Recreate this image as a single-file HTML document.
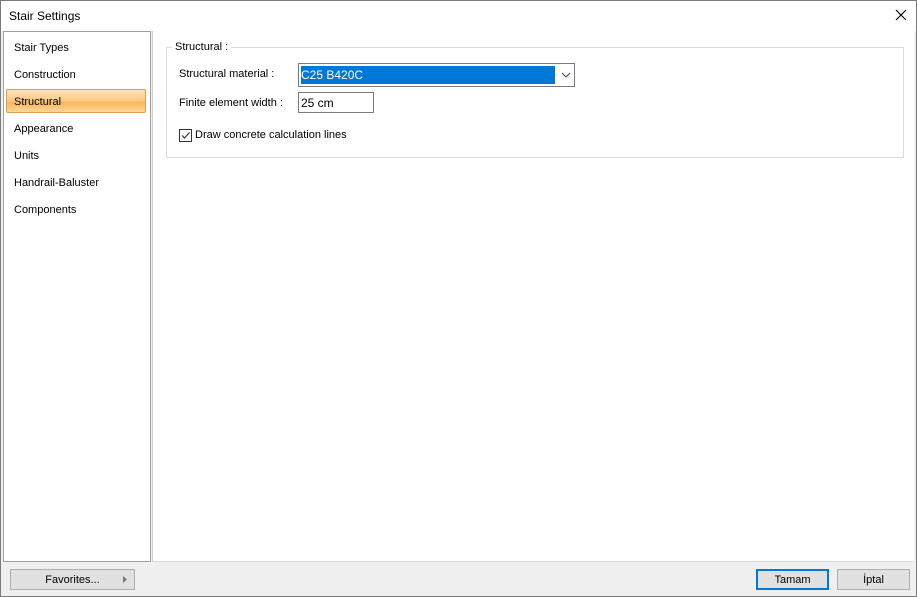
<!DOCTYPE html>
<html><head><style>
*{margin:0;padding:0;box-sizing:border-box}
body{width:917px;height:597px;overflow:hidden;background:#f0f0f0;font-family:"Liberation Sans",sans-serif;font-size:12px;color:#000;position:relative}
.frame{position:absolute;left:0;top:0;width:917px;height:597px;border:1px solid #7a7a7a;z-index:10;pointer-events:none}
.title{position:absolute;left:0;top:0;width:917px;height:31px;background:#fff}
.title span{position:absolute;left:9px;top:9px;font-size:12px}
.abs{position:absolute}
.left{left:3px;top:31px;width:148px;height:531px;background:#fff;border:1px solid #a0a0a0}
.right{left:152px;top:31px;width:762px;height:531px;background:#fff;border-left:1px solid #d0d0d0;border-bottom:1px solid #d8d8d8}
.item{position:absolute;left:14px;font-size:11px}
.sel{left:6px;top:89px;width:140px;height:24px;border:1px solid #d8a050;border-radius:2px;background:linear-gradient(#fde3b8,#fbc983 50%,#f8b55c 55%,#fcd79a)}
.btn{position:absolute;height:21px;border:1px solid #adadad;background:#e1e1e1;font-size:11px;text-align:center;line-height:21px}
</style></head><body>
<div class="frame"></div>
<div class="title"><span>Stair Settings</span>
<svg class="abs" style="left:895px;top:9px" width="12" height="12"><path d="M1 1L11 11M11 1L1 11" stroke="#000" stroke-width="1.2"/></svg></div>
<div class="abs left"></div>
<div class="abs sel"></div>
<div class="item" style="top:42px">Stair Types</div>
<div class="item" style="top:69px">Construction</div>
<div class="item" style="top:96px">Structural</div>
<div class="item" style="top:123px">Appearance</div>
<div class="item" style="top:150px">Units</div>
<div class="item" style="top:177px">Handrail-Baluster</div>
<div class="item" style="top:204px">Components</div>
<div class="abs right"></div>
<div class="abs" style="left:166px;top:47px;width:738px;height:111px;border:1px solid #dcdcdc"></div>
<div class="abs" style="left:172px;top:41px;background:#fff;padding:0 3px;font-size:11px">Structural :</div>
<div class="abs" style="left:179px;top:68px;font-size:11px">Structural material :</div>
<div class="abs" style="left:298px;top:63px;width:277px;height:24px;border:1px solid #7a7a7a;background:#fff"></div>
<div class="abs" style="left:301px;top:66px;width:254px;height:18px;background:#0078d7;color:#fff;font-size:12px;line-height:19px">C25 B420C</div>
<svg class="abs" style="left:561px;top:71px" width="10" height="8"><path d="M1 2L5 6L9 2" stroke="#444" fill="none"/></svg>
<div class="abs" style="left:179px;top:97px;font-size:11px">Finite element width :</div>
<div class="abs" style="left:298px;top:92px;width:76px;height:21px;border:1px solid #7a7a7a;background:#fff;padding:3px 2px;font-size:12px">25 cm</div>
<div class="abs" style="left:179px;top:129px;width:13px;height:13px;border:1px solid #333;background:#fff"></div>
<svg class="abs" style="left:180px;top:130px" width="11" height="11"><path d="M2 5.5L4.5 8L9.5 2.5" stroke="#333" stroke-width="1.2" fill="none"/></svg>
<div class="abs" style="left:195px;top:129px;font-size:11px">Draw concrete calculation lines</div>
<div class="btn" style="left:10px;top:569px;width:125px">Favorites...<svg class="abs" style="left:111px;top:5px" width="6" height="9"><path d="M1 1L5 4.5L1 8Z" fill="#777"/></svg></div>
<div class="btn" style="left:756px;top:569px;width:73px;border:2px solid #0078d7;line-height:19px">Tamam</div>
<div class="btn" style="left:837px;top:569px;width:73px">İptal</div>
</body></html>
